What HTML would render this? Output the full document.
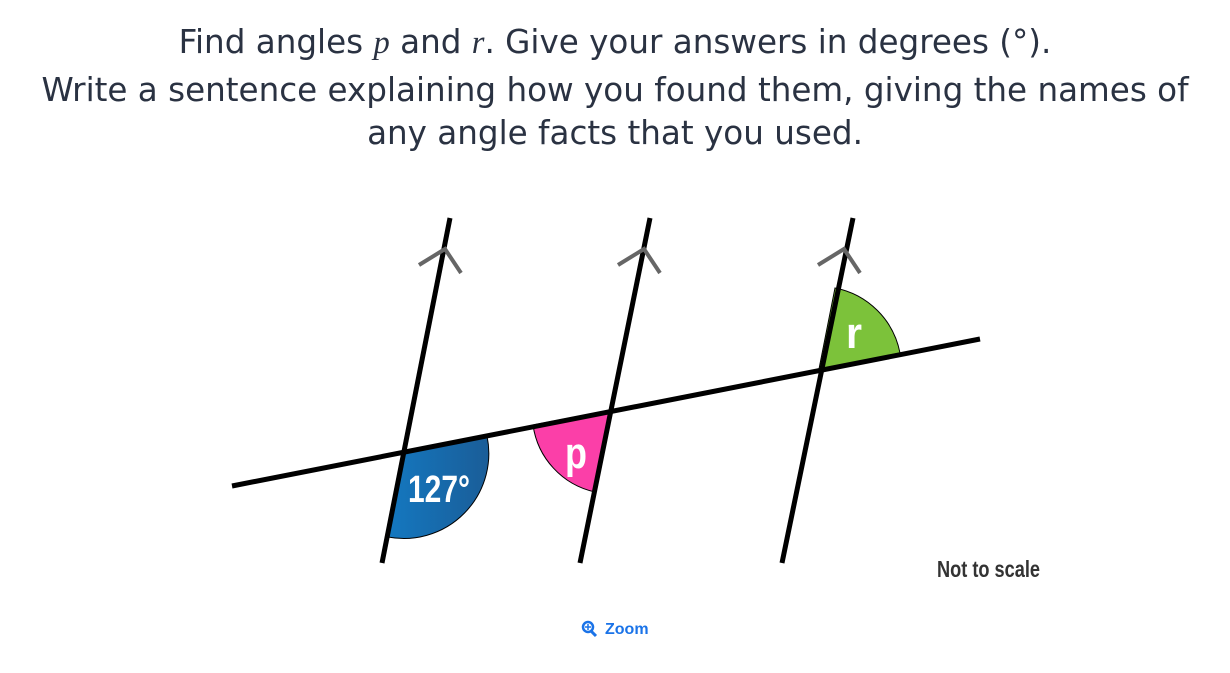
<!DOCTYPE html>
<html><head><style>
body{margin:0;width:1230px;height:673px;background:#fff;overflow:hidden;font-family:"DejaVu Sans","Liberation Sans",sans-serif;}
.t{position:absolute;left:0;width:1230px;text-align:center;color:#2a3242;font-size:32.6px;white-space:nowrap;}
</style></head><body>
<div class="t" style="top:23px">Find angles <i style="font-family:'Liberation Serif',serif">p</i> and <i style="font-family:'Liberation Serif',serif">r</i>. Give your answers in degrees (°).</div>
<div class="t" style="top:71px">Write a sentence explaining how you found them, giving the names of</div>
<div class="t" style="top:114px">any angle facts that you used.</div>
<svg width="1230" height="673" style="position:absolute;left:0;top:0">
<defs><linearGradient id="b" x1="0" x2="1"><stop offset="0" stop-color="#1478c0"/><stop offset="1" stop-color="#1a5d98"/></linearGradient></defs>
<path d="M404,452 L487,436 A85,85 0 0 1 388,537 Z" fill="url(#b)" stroke="#000" stroke-width="1"/>
<path d="M611,410 L533,425 A80,80 0 0 0 595,492 Z" fill="#fb3fa8" stroke="#000" stroke-width="1"/>
<path d="M819,369 L835,288 A82,82 0 0 1 900,353 Z" fill="#7cc23a" stroke="#000" stroke-width="1"/>
<g stroke="#000" stroke-width="5" fill="none">
<line x1="232" y1="486" x2="980" y2="339"/>
<line x1="450" y1="218" x2="382" y2="563"/>
<line x1="650" y1="218" x2="580" y2="563"/>
<line x1="853" y1="218" x2="782" y2="563"/>
</g>
<g stroke="#666" stroke-width="4" fill="none">
<polyline points="419,265 445,249 461,273"/>
<polyline points="618,265 644,249 660,273"/>
<polyline points="818,265 844,249 860,273"/>
</g>
<g fill="#fff" font-family="Liberation Sans,sans-serif" font-weight="bold">
<text x="408" y="502" font-size="38" textLength="62" lengthAdjust="spacingAndGlyphs">127°</text>
<text x="565" y="468" font-size="44" textLength="22" lengthAdjust="spacingAndGlyphs">p</text>
<text x="846" y="348" font-size="44" textLength="16" lengthAdjust="spacingAndGlyphs">r</text>
</g>
<text x="937" y="577" font-size="23" fill="#333" font-family="Liberation Sans,sans-serif" font-weight="bold" textLength="103" lengthAdjust="spacingAndGlyphs">Not to scale</text>
<circle cx="588" cy="627" r="5" fill="none" stroke="#1a73e8" stroke-width="2.5"/>
<line x1="591" y1="631" x2="596" y2="636" stroke="#1a73e8" stroke-width="3"/>
<path d="M585,627h6M588,624v6" stroke="#1a73e8" stroke-width="1.5"/>
<text x="605" y="634" font-size="16" fill="#1a73e8" font-weight="bold" font-family="Liberation Sans,sans-serif">Zoom</text>
</svg>
</body></html>
